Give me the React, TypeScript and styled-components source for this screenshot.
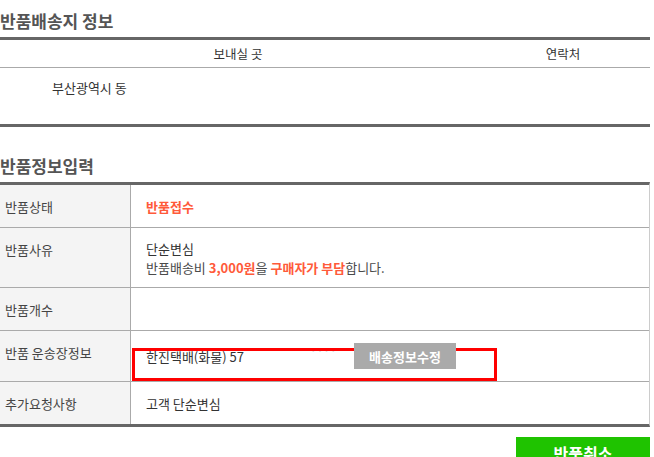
import React from "react";
import styled, { createGlobalStyle } from "styled-components";

const GlobalStyle = createGlobalStyle`
  html, body {
    margin: 0;
    padding: 0;
    background: #ffffff;
  }
  body {
    font-family: "Noto Sans CJK KR", "Noto Sans", sans-serif;
    font-size: 13px;
    color: #333333;
  }
  * { box-sizing: border-box; }
`;

const Page = styled.div`
  width: 650px;
  overflow: hidden;
`;

const Section = styled.section<{ $gap?: number }>`
  margin-top: ${(p) => p.$gap ?? 0}px;
`;

const SectionTitle = styled.h2`
  margin: 0;
  padding: 10px 0 5px;
  font-size: 17px;
  line-height: 22px;
  font-weight: 700;
  color: #555555;
`;

const AddressTable = styled.div`
  border-top: 3px solid #666666;
  border-bottom: 3px solid #666666;
`;

const AddressRow = styled.div<{ $head?: boolean }>`
  display: grid;
  grid-template-columns: 476px 1fr;
  border-bottom: ${(p) => (p.$head ? "1px solid #aaaaaa" : "none")};
`;

const HeadCell = styled.div`
  padding: 5px 0;
  font-size: 12.5px;
  line-height: 17px;
  text-align: center;
  color: #333333;
`;

const AddressCell = styled.div`
  padding: 11px 0 28px 52px;
  line-height: 17px;
  color: #333333;
`;

const InfoTable = styled.div`
  border-top: 3px solid #666666;
  border-bottom: 3px solid #666666;
  border-right: 1px solid #cccccc;
`;

const InfoRow = styled.div<{ $last?: boolean }>`
  display: grid;
  grid-template-columns: 131px 1fr;
  border-bottom: ${(p) => (p.$last ? "none" : "1px solid #aaaaaa")};
`;

const Label = styled.div`
  background: #f4f4f4;
  border-right: 1px solid #aaaaaa;
  padding: 13px 0 12px 5px;
  line-height: 17px;
  color: #444444;
`;

const Value = styled.div<{ $variant?: "normal" | "tight" | "multi" }>`
  position: relative;
  padding: ${(p) =>
    p.$variant === "tight"
      ? "12px 0 12px 15px"
      : p.$variant === "multi"
      ? "11px 0 10px 15px"
      : "13px 0 12px 15px"};
  line-height: ${(p) => (p.$variant === "multi" ? "19px" : "17px")};
  color: #333333;
  min-height: 42px;
`;

const Accent = styled.span`
  color: #ff5a3a;
  font-weight: 700;
`;

const SubLine = styled.div`
  color: #4a4a4a;
`;

const TrackLine = styled.div`
  display: flex;
  align-items: center;
`;

const TrackInfo = styled.div`
  width: 208px;
  display: flex;
  align-items: center;
  justify-content: space-between;
  padding-right: 17px;
`;

const Masked = styled.span`
  color: #d8d8d8;
  font-size: 10px;
  line-height: 10px;
  letter-spacing: 1px;
  margin-bottom: 10px;
`;

const GrayButton = styled.button`
  position: relative;
  z-index: 1;
  width: 102px;
  height: 26px;
  border: none;
  padding: 0;
  background: #aaaaaa;
  color: #ffffff;
  font-family: inherit;
  font-size: 13px;
  font-weight: 700;
  cursor: pointer;
`;

const Highlight = styled.div`
  position: absolute;
  z-index: 0;
  left: 1px;
  top: 17px;
  width: 365px;
  height: 33px;
  border: 3px solid #ff0000;
  pointer-events: none;
`;

const Actions = styled.div`
  display: flex;
  justify-content: flex-end;
  padding-top: 10px;
`;

const CancelButton = styled.button`
  width: 134px;
  height: 40px;
  border: none;
  padding: 5px 0 13px;
  background: #1fc300;
  color: #ffffff;
  font-family: inherit;
  font-size: 16px;
  line-height: 22px;
  font-weight: 700;
  cursor: pointer;
`;

export default function App() {
  return (
    <Page>
      <GlobalStyle />
      <Section>
        <SectionTitle>반품배송지 정보</SectionTitle>
        <AddressTable>
          <AddressRow $head>
            <HeadCell>보내실 곳</HeadCell>
            <HeadCell>연락처</HeadCell>
          </AddressRow>
          <AddressRow>
            <AddressCell>부산광역시 동</AddressCell>
            <div />
          </AddressRow>
        </AddressTable>
      </Section>

      <Section $gap={18}>
        <SectionTitle>반품정보입력</SectionTitle>
        <InfoTable>
          <InfoRow>
            <Label>반품상태</Label>
            <Value>
              <Accent>반품접수</Accent>
            </Value>
          </InfoRow>
          <InfoRow>
            <Label>반품사유</Label>
            <Value $variant="multi">
              <div>단순변심</div>
              <SubLine>
                반품배송비 <Accent>3,000원</Accent>을 <Accent>구매자가 부담</Accent>합니다.
              </SubLine>
            </Value>
          </InfoRow>
          <InfoRow>
            <Label>반품개수</Label>
            <Value>&nbsp;</Value>
          </InfoRow>
          <InfoRow>
            <Label>반품 운송장정보</Label>
            <Value $variant="tight">
              <Highlight />
              <TrackLine>
                <TrackInfo>
                  <span>한진택배(화물) 57</span>
                  <Masked>····</Masked>
                </TrackInfo>
                <GrayButton type="button">배송정보수정</GrayButton>
              </TrackLine>
            </Value>
          </InfoRow>
          <InfoRow $last>
            <Label>추가요청사항</Label>
            <Value>고객 단순변심</Value>
          </InfoRow>
        </InfoTable>
      </Section>

      <Actions>
        <CancelButton type="button">반품취소</CancelButton>
      </Actions>
    </Page>
  );
}
